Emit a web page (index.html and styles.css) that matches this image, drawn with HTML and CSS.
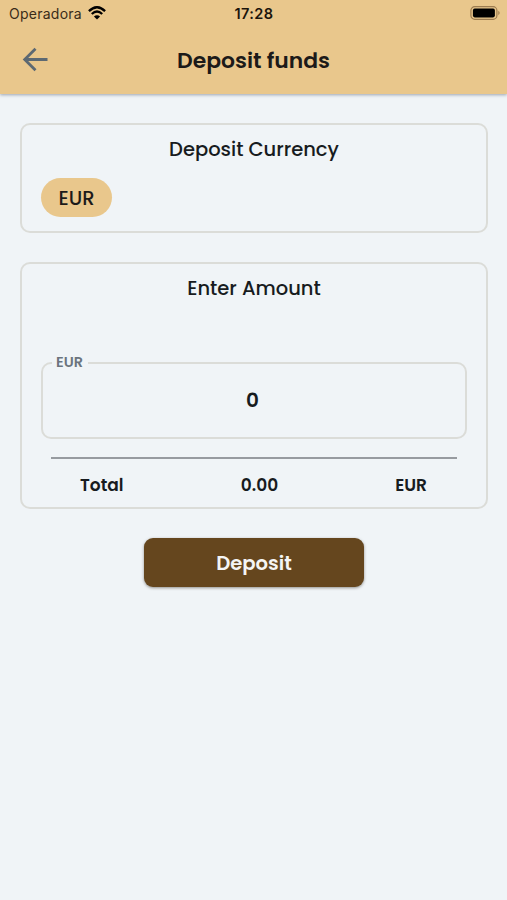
FILE: index.html
```html
<!DOCTYPE html>
<html lang="en">
<head>
<meta charset="utf-8">
<title>Deposit funds</title>
<link rel="stylesheet" href="styles.css">
</head>
<body>
<header class="top">
  <div class="status">
    <div class="carrier"><span class="operator">Operadora</span>
      <svg class="wifi" width="18" height="14" viewBox="0 0 18 14" fill="none" stroke="#000" stroke-width="2.3"><path d="M.9 5.1Q9-2.7 17.1 5.1M3.8 8Q9 3.1 14.2 8"/><path d="M9 13.5 5.9 10.4Q9 7.9 12.1 10.4Z" fill="#000" stroke="none"/></svg>
    </div>
    <time class="clock">17:28</time>
    <svg class="battery" width="31" height="14" viewBox="0 0 31 14"><rect x=".9" y=".7" width="26" height="12.6" rx="3.8" fill="none" stroke="#9c7c50" stroke-width="1.2"/><rect x="2.9" y="2.6" width="22" height="8.8" rx="1.8"/><path d="M28.3 4.8Q31 7 28.3 9.2Z" fill="#9c7c50"/></svg>
  </div>
  <div class="bar">
    <svg class="back" width="26" height="26" viewBox="0 0 26 26" fill="none" stroke="#5d6972" stroke-width="2.8"><path d="M25.5 12.5H3M13.5 1.7 2.7 12.5l10.8 10.8"/></svg>
    <h1 class="title">Deposit funds</h1>
  </div>
</header>
<main class="content">
  <section class="card currency">
    <h2 class="heading">Deposit Currency</h2>
    <button class="chip">EUR</button>
  </section>
  <section class="card amount">
    <h2 class="heading">Enter Amount</h2>
    <fieldset class="field"><legend class="label">EUR</legend><span class="value">0</span></fieldset>
    <div class="totals"><span class="total">Total</span><span class="sum">0.00</span><span class="unit">EUR</span></div>
  </section>
  <button class="deposit">Deposit</button>
</main>
</body>
</html>
```

FILE: styles.css
```css
* { box-sizing: border-box; }
body { margin: 0; min-height: 900px; background: #f0f4f7; color: #171b20; font-family: Poppins, Inter, sans-serif; }
button { border: 0; padding: 0; font-family: inherit; color: inherit; }
h1, h2 { margin: 0; }
.top { height: 94px; background: #e9c78c; box-shadow: 0 1px 3px #66708099; }
.status { height: 28px; display: grid; grid-template-columns: 1fr auto 1fr; align-items: center; padding: 0 6px 0 9px; color: #1b140b; font-family: Inter, sans-serif; }
.carrier { display: flex; align-items: center; gap: 6px; font-size: 14px; line-height: 28px; color: #3a2c19; }
.operator { width: 73px; letter-spacing: .25px; white-space: nowrap; }
.wifi { margin-top: -2px; }
.clock { font-size: 14.5px; line-height: 28px; font-weight: 600; letter-spacing: .4px; margin-right: 2px; }
.battery { justify-self: end; margin-top: -2px; }
.bar { height: 64px; display: grid; grid-template-columns: 60px 1fr 60px; align-items: center; }
.back { margin-left: 22px; }
.title { text-align: center; font-size: 21.9px; line-height: 30px; font-weight: 600; padding-top: 1px; color: #1c1a19; }
.content { padding: 29px 19px 0 20px; display: flex; flex-direction: column; align-items: stretch; }
.card { border: 2px solid #dbdcd8; border-radius: 10px; padding: 0 19px; }
.currency { height: 110px; }
.heading { text-align: center; font-size: 19.5px; line-height: 28px; font-weight: 500; padding-top: 11px; }
.chip { display: block; width: 71px; height: 39px; margin-top: 14px; border-radius: 20px; background: #e9c78c; font-size: 19.5px; line-height: 41px; font-weight: 500; color: #1c1a19; }
.amount { height: 247px; margin-top: 29px; }
.field { margin: 49px 0 0; width: 426px; height: 87px; min-width: 0; padding: 0; border: 2px solid #dbdcd8; border-radius: 10px; text-align: center; }
.label { margin-left: 9px; margin-right: auto; padding: 0 5px 2px 4px; font-size: 14.4px; line-height: 20px; font-weight: 600; color: #6b747e; }
.value { display: block; font-size: 20px; line-height: 28px; margin-top: 12px; padding-right: 3px; font-weight: 600; }
.totals { display: grid; grid-template-columns: 1fr 1fr 1fr; margin: 18px 10px 0; border-top: 2px solid #979ba0; padding-top: 13px; font-size: 17px; line-height: 26px; font-weight: 600; }
.total { padding-left: 29px; }
.sum { text-align: center; padding-left: 11px; }
.unit { text-align: right; padding-right: 30px; }
.deposit { width: 220px; height: 49px; margin: 29px 0 0 124px; border-radius: 9px; background: #65461e; color: #f4f5f5; font-size: 19.6px; line-height: 50px; font-weight: 600; box-shadow: 0 1px 3px #55504a99; }
```
